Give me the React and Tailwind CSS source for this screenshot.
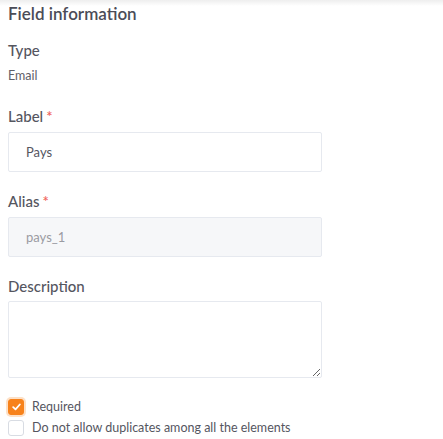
import { useState } from "react";

const Star = () => <span className="text-[#f0645a] ml-[3px]">*</span>;

const Check = ({ checked, onClick }) => (
  <button
    type="button"
    onClick={onClick}
    className={
      checked
        ? "w-4 h-4 rounded-[3px] bg-[#f7821b] border border-[#f7821b] flex items-center justify-center shadow-[0_0_0_2px_rgba(247,130,27,0.25)]"
        : "w-4 h-4 rounded-[3px] bg-white border border-[#d8dce3]"
    }
  >
    {checked && (
      <svg width="9" height="8" viewBox="0 0 9 8" fill="none">
        <path d="M1.2 4.2 L3.5 6.3 L7.8 1.5" stroke="white" strokeWidth="1.8" strokeLinecap="round" strokeLinejoin="round" />
      </svg>
    )}
  </button>
);

const App = () => {
  // field state
  const [label, setLabel] = useState("Pays");
  const [description, setDescription] = useState("");
  const [required, setRequired] = useState(true);
  const [unique, setUnique] = useState(false);

  return (
    <div className="relative w-[443px] h-[439px] bg-white overflow-hidden font-['Lato',sans-serif] text-[#55565f]">
      {/* top shade */}
      <div className="absolute top-0 left-0 right-0 h-[6px] bg-gradient-to-b from-[#eeeeee] to-white" />

      <div className="relative px-2 pt-[2px]">
        <h2 className="text-[17px] font-semibold text-[#4b4c57] leading-[24px]">Field information</h2>

        {/* Type */}
        <div className="mt-[14px] text-[15px] font-medium leading-[20px]">Type</div>
        <div className="mt-[8px] text-[12.5px] leading-[16px] text-[#5f6068]">Email</div>

        {/* Label */}
        <div className="mt-[22px] text-[15px] font-medium leading-[20px]">
          Label
          <Star />
        </div>
        <input
          value={label}
          onChange={(e) => setLabel(e.target.value)}
          className="mt-[6px] block w-[314px] h-[40px] border border-[#e6e9ef] rounded-[2px] px-[17px] text-[13px] text-[#55565f] outline-none"
        />

        {/* Alias */}
        <div className="mt-[19px] text-[15px] font-medium leading-[20px]">
          Alias
          <Star />
        </div>
        <input
          value="pays_1"
          disabled
          className="mt-[6px] block w-[314px] h-[40px] border border-[#e6e9ef] bg-[#f6f7f9] rounded-[2px] px-[17px] text-[13px] text-[#9a9ba2] outline-none"
        />

        {/* Description */}
        <div className="mt-[19px] text-[15px] font-medium leading-[20px]">Description</div>
        <textarea
          value={description}
          onChange={(e) => setDescription(e.target.value)}
          className="mt-[5px] block w-[314px] h-[77px] border border-[#e6e9ef] rounded-[2px] px-[10px] py-2 text-[13px] outline-none"
        />

        {/* Options */}
        <div className="mt-[21px] flex flex-col gap-[5px]">
          <label className="flex items-center gap-2 text-[12.5px] leading-[16px]">
            <Check checked={required} onClick={() => setRequired(!required)} />
            Required
          </label>
          <label className="flex items-center gap-2 text-[12.5px] leading-[16px]">
            <Check checked={unique} onClick={() => setUnique(!unique)} />
            Do not allow duplicates among all the elements
          </label>
        </div>
      </div>
    </div>
  );
};

export default App;
